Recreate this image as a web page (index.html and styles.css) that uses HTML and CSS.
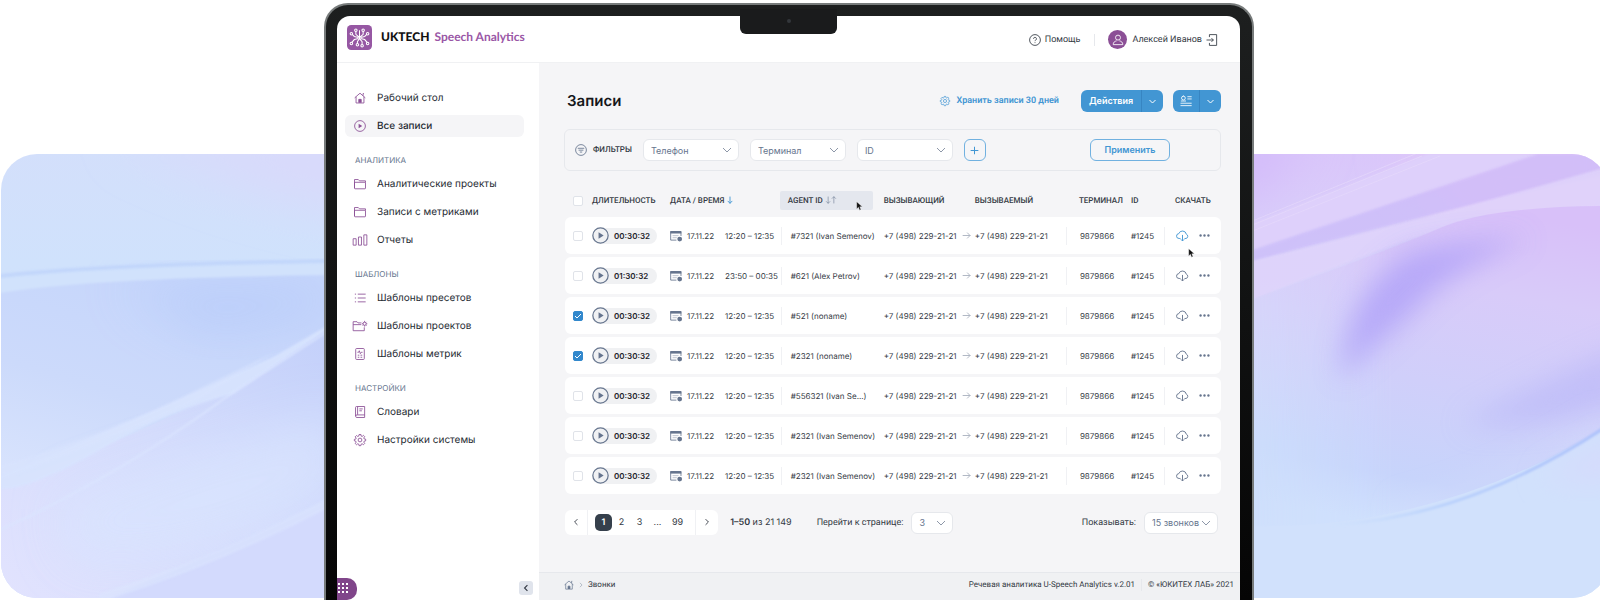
FILE: index.html
```html
<!DOCTYPE html>
<html lang="ru">
<head>
    <meta charset="UTF-8">
    <meta name="viewport" content="width=device-width, initial-scale=1.0">
    <title>UKTECH Speech Analytics - Записи</title>
    <link rel="stylesheet" href="styles.css">
</head>
<body>
    <!-- Icon set -->
    <svg class="sprite" aria-hidden="true">
        <symbol id="i-home" viewBox="0 0 14 14"><path d="M.8 6.800 7 1.400l6.200 5.400M2.400 5.600v7.200h9.200V5.600M10.600 4.400V1.800h1M5.600 12.400V8.600h2.800v3.800"/><path class="fill" d="M5.600 8.600h2.800v4H5.600z"/></symbol>
        <symbol id="i-play" viewBox="0 0 14 14"><circle cx="7" cy="7" r="6.300"/><path class="fill" d="M5.400 4.400 9.600 7 5.400 9.600z"/></symbol>
        <symbol id="i-folder" viewBox="0 0 14 14"><path d="M.6 11.800V1.800h4.400l1.400 1.500h7v1.500M.6 5h12.800v7a.6.6 0 0 1-.6.6H1.200a.6.6 0 0 1-.6-.6z"/></symbol>
        <symbol id="i-bars" viewBox="0 0 14 14"><path d="M-1 5.500h3.500v7.500H-1zM5.200 3.500h3.500v9.500h-3.500zM11.500 1H15v12h-3.500z"/></symbol>
        <symbol id="i-list" viewBox="0 0 14 14"><path d="M4.400 2.500h9.200M4.400 7h9.200M4.400 11.500h9.200M1 2.500h1.400M1 7h1.400M1 11.500h1.400"/></symbol>
        <symbol id="i-folder-gear" viewBox="0 0 14 14"><path d="M12 8.500v4H-1V2h4.500l1.200 1.400h4M-1 5.400h9.500"/><circle cx="12.400" cy="4.400" r="1.800"/><path d="M12.400 1v1.500M12.400 6.200v1.500M9.200 4.400h1.300M14.200 4.400h1.300M10.200 2.200l.8.8M13.800 5.800l.8.8M14.600 2.200l-.8.8M11 5.800l-.8.8"/></symbol>
        <symbol id="i-metric" viewBox="0 0 14 14"><rect x="2" y=".6" width="10" height="12.800" rx="1"/><path d="M4 5h1.400l.8-1.800 1.200 3.400L8.400 5H10M4.400 8.400h1.800M7.600 8.400h2M4.400 10.800h1.800M7.600 10.800h2"/></symbol>
        <symbol id="i-book" viewBox="0 0 14 14"><path d="M12.400 10.400H3.400a1.500 1.500 0 0 0 0 3h9V.6H3a1.200 1.200 0 0 0-1.200 1.200v10M4.200 1v9.200M6.200 3.400h4M6.200 5.600h3"/></symbol>
        <symbol id="i-gear" viewBox="0 0 14 14"><circle cx="7" cy="7" r="2.200"/><path d="m5.900.6-.3 1.800-1.200.5-1.500-1.100-1.500 1.500 1.100 1.500-.5 1.200-1.600.2v1.800l1.600.3.5 1.200-1.100 1.500 1.500 1.500 1.500-1.100 1.200.5.3 1.700h2.100l.3-1.700 1.200-.5 1.500 1.100 1.500-1.500-1.100-1.500.5-1.200 1.700-.3V6l-1.700-.2-.5-1.200 1.100-1.500-1.500-1.500L9.500 2.900l-1.200-.5L8.100.6z"/></symbol>
        <symbol id="i-help" viewBox="0 0 14 14"><circle cx="7" cy="7" r="6.300"/><path d="M5.300 5.600a1.700 1.700 0 1 1 2.500 1.500c-.5.3-.8.6-.8 1.200M7 9.700v.9"/></symbol>
        <symbol id="i-user" viewBox="0 0 14 14"><circle cx="7" cy="4.200" r="2.900"/><path d="M5.400 8C3 8.400 1.400 9.800 1.400 12.400h11.200C12.600 9.800 11 8.400 8.600 8"/></symbol>
        <symbol id="i-exit" viewBox="0 0 14 14"><path d="M4 3.600V.7h8.400v12.600H4v-2.900M.6 7h8M6.400 4.800 8.600 7 6.400 9.200"/></symbol>
        <symbol id="i-filter" viewBox="0 0 14 14"><circle cx="7" cy="7" r="6.300"/><path d="M3.200 5h7.600M4.200 7.200h5.600M5.600 9.400h2.800"/></symbol>
        <symbol id="i-down" viewBox="0 0 14 14"><path d="M1 4 7 10l6-6"/></symbol>
        <symbol id="i-left" viewBox="0 0 14 14"><path d="M9.500 2 4.500 7l5 5"/></symbol>
        <symbol id="i-right" viewBox="0 0 14 14"><path d="m4.500 2 5 5-5 5"/></symbol>
        <symbol id="i-plus" viewBox="0 0 14 14"><path d="M7 1v12M1 7h12"/></symbol>
        <symbol id="i-card" viewBox="0 0 14 14"><circle cx="4" cy="3.600" r="2.200"/><path d="M1 7h6M8.600 2h5M8.600 4.600h5M.6 9.600h13M.6 12.400h13M4 .6v1"/></symbol>
        <symbol id="i-calendar" viewBox="0 0 14 14"><path d="M7.500 11.800H.8V2h12v5"/><path class="fill" d="M.4 1.200h12.800V4.200H.4z"/><path class="faint" d="M3 6.600h7M3 9h5"/><circle class="fill" cx="11.300" cy="10.600" r="2.800"/></symbol>
        <symbol id="i-cloud" viewBox="0 0 14 14"><path d="M4.800 10.200H3.400a2.600 2.600 0 0 1-.4-5.200 4.200 4.200 0 0 1 8.100.6 2.400 2.400 0 0 1-.3 4.600H9.200M7 6.400v6.400M5.200 11.100 7 12.900l1.800-1.800"/></symbol>
        <symbol id="i-dots" viewBox="0 0 14 14"><circle class="fill" cx="2" cy="7" r="1.500"/><circle class="fill" cx="7" cy="7" r="1.500"/><circle class="fill" cx="12" cy="7" r="1.500"/></symbol>
        <symbol id="i-arrow" viewBox="0 0 14 14"><path d="M1 7h12M8 2.500 12.500 7 8 11.500"/></symbol>
        <symbol id="i-sort-down" viewBox="0 0 14 14"><path d="M7 1v12M3 8.600 7 12.800 11 8.600"/></symbol>
        <symbol id="i-sort" viewBox="0 0 20 14"><path d="M5 1v12M1.500 9.300 5 12.800l3.500-3.500M15 13V1M11.500 4.700 15 1.200l3.500 3.500"/></symbol>
        <symbol id="i-cursor" viewBox="0 0 10 14"><path d="M1 .8v10.400l2.500-2.300 1.700 4 1.900-.8-1.700-3.900H9z"/></symbol>
    </svg>

    <div class="stage">
        <svg class="backdrop" viewBox="0 0 1600 600" preserveAspectRatio="none" aria-hidden="true">
            <defs>
                <clipPath id="card"><rect x="1" y="154" width="1607" height="444" rx="36"/></clipPath>
                <linearGradient id="left" x1="0" y1="0" x2="0" y2="1">
                    <stop offset="0" stop-color="#d3dffb"/><stop offset=".25" stop-color="#d0e2fc"/>
                    <stop offset=".6" stop-color="#d2dffc"/><stop offset="1" stop-color="#dee2fe"/>
                </linearGradient>
                <linearGradient id="wave" x1=".3" y1="0" x2="0" y2="1">
                    <stop offset="0" stop-color="#c6d6fb"/><stop offset=".35" stop-color="#ccdafb"/>
                    <stop offset=".65" stop-color="#d8e3fd"/><stop offset="1" stop-color="#d9e3fd"/>
                </linearGradient>
                <linearGradient id="low" x1="1" y1="0" x2="0" y2="1">
                    <stop offset="0" stop-color="#c3d0fa"/><stop offset=".45" stop-color="#d3dbfc"/><stop offset="1" stop-color="#e2e3fe"/>
                </linearGradient>
                <linearGradient id="right" x1="0" y1="0" x2="0" y2="1">
                    <stop offset="0" stop-color="#dac6fa"/><stop offset=".35" stop-color="#d7d6fb"/>
                    <stop offset=".65" stop-color="#cddefc"/><stop offset="1" stop-color="#d2e2fc"/>
                </linearGradient>
                <linearGradient id="petal" x1=".6" y1="0" x2=".4" y2="1">
                    <stop offset="0" stop-color="#d8c0f9"/><stop offset=".25" stop-color="#d8cbf9"/>
                    <stop offset=".55" stop-color="#d0cffa"/><stop offset=".85" stop-color="#c7d4fb"/><stop offset="1" stop-color="#cfe0fd"/>
                </linearGradient>
                <linearGradient id="fade" x1="0" y1="0" x2="1" y2="0">
                    <stop offset="0" stop-color="#fff" stop-opacity="0"/><stop offset=".4" stop-color="#fff"/>
                </linearGradient>
                <linearGradient id="rim" gradientUnits="userSpaceOnUse" x1="1330" y1="0" x2="1610" y2="0">
                    <stop offset="0" stop-color="#c4dcfc" stop-opacity="0"/><stop offset=".4" stop-color="#b9d1fc"/><stop offset="1" stop-color="#acc0fb"/>
                </linearGradient>
                <mask id="petal-mask"><rect x="1240" y="150" width="380" height="450" fill="url(#fade)"/></mask>
                <filter id="b2" x="-20%" y="-20%" width="140%" height="140%"><feGaussianBlur stdDeviation="1"/></filter>
                <filter id="b9" x="-50%" y="-50%" width="200%" height="200%"><feGaussianBlur stdDeviation="14"/></filter>
                <filter id="b25" x="-50%" y="-50%" width="200%" height="200%"><feGaussianBlur stdDeviation="25"/></filter>
            </defs>
            <g clip-path="url(#card)">
                <path fill="url(#left)" d="M0 150h700v450H0z"/>
                <path fill="#d9d9fb" filter="url(#b25)" d="M120 130h320v90Q260 205 120 130z"/>
                <path fill="url(#wave)" d="M0 275Q110 264 330 259V600H0z"/>
                <path fill="#b7cbfa" filter="url(#b25)" opacity=".8" d="M120 285h220l-20 30-110 20z"/>
                <path fill="#d1e2fc" d="M0 274Q110 264 330 258v17Q90 278 0 293z" filter="url(#b2)"/>
                <path fill="none" stroke="#bfd4fb" stroke-width="4" filter="url(#b2)" opacity=".8" d="M0 276Q110 264 330 261"/>
                <path fill="url(#low)" d="M0 484Q180 425 330 327V600H0z"/>
                <path fill="#d9e4fe" filter="url(#b25)" opacity=".8" d="M60 500Q200 450 340 410v80Q200 570 70 560z"/>
                <path fill="#d8e4fe" filter="url(#b2)" opacity=".9" d="M0 476Q170 405 275 356L330 324v4L232 394Q170 410 100 450T0 489z"/>
                <path fill="#d9e4fe" filter="url(#b2)" opacity=".5" d="M0 466Q120 430 200 388L275 352l-75 47Q120 436 0 480z"/>
                <path fill="none" stroke="#dbe6fe" stroke-width="2" filter="url(#b2)" opacity=".8" d="M0 530Q120 475 225 398L330 330"/>
                <path fill="#d3dafd" filter="url(#b2)" d="M110 598Q220 550 330 502v98H100z"/>
                <path fill="none" stroke="#dbe5fe" stroke-width="9" filter="url(#b2)" opacity=".6" d="M100 598Q220 560 330 502"/>

                <path fill="url(#right)" d="M900 150h710v450H900z"/>
                <path fill="#e3c8f8" filter="url(#b25)" d="M1400 140h220v80l-150 10z"/>
                <path fill="#d2b9fa" filter="url(#b25)" d="M1200 130h110l-70 80z"/>
                <path fill="#ded0fb" filter="url(#b2)" d="M1250 224 1428 154h112L1250 251z"/>
                <path fill="none" stroke="#e6d8fb" stroke-width="1" opacity=".7" d="m1250 226 172-70M1250 232l190-76M1250 222l170-70"/>
                <path fill="#c9b8f9" filter="url(#b2)" opacity=".6" d="M1250 251 1538 154h70v20Q1420 215 1250 262z"/>
                <path fill="#e0d4fb" filter="url(#b2)" opacity=".85" d="M1250 262Q1440 215 1610 166v40Q1470 214 1380 250L1250 300z"/>
                <g mask="url(#petal-mask)">
                    <path fill="url(#petal)" d="M1250 300Q1390 250 1440 228T1610 206V422Q1490 525 1330 525H1250z"/>
                </g>
                <path fill="#ac9df8" filter="url(#b9)" opacity=".75" d="M1340 380Q1345 290 1410 252Q1460 240 1530 238Q1440 275 1410 315Q1375 345 1340 380z"/>
                <path fill="#b3b0f7" filter="url(#b9)" opacity=".5" d="M1625 345Q1540 380 1460 425Q1540 430 1625 405z"/>
                <path fill="none" stroke="#d5dcfc" stroke-width="8" filter="url(#b9)" d="M1400 512Q1500 490 1610 420"/>
                <path fill="#d1e1fc" d="M1250 526Q1440 530 1610 424V600H1250z"/>
                <path fill="#d5dafc" filter="url(#b9)" d="M1540 480 1620 435v45z"/>
                <path fill="none" stroke="url(#rim)" stroke-width="3" filter="url(#b2)" d="M1330 525Q1470 518 1610 424"/>
            </g>
        </svg>

        <div class="laptop">
            <div class="notch"></div>
            <div class="screen">
                <header class="topbar">
                    <a class="brand" href="#">
                        <svg class="brand-mark" viewBox="0 0 24 24" aria-hidden="true">
                            <rect width="24" height="24" rx="4"/>
                            <path d="M12 13V5M12 12 8.500 9V6M12 12l3.500-3V6M11 12 7 11 5 9M13 12l4-1 2-2M11 13l-4 1-2.500 3M13 13l4 1 2.500 3M12 13l-2 3v2M12 13l2.500 3v3"/>
                            <circle cx="8.500" cy="5" r="1.200"/><circle cx="15.500" cy="5" r="1.200"/><circle cx="4.200" cy="8.300" r="1.200"/><circle cx="19.800" cy="8.300" r="1.200"/>
                            <circle cx="4.200" cy="17.800" r="1.200"/><circle cx="19.800" cy="17.800" r="1.200"/><circle cx="10" cy="19" r="1.200"/><circle cx="14.500" cy="20" r="1.200"/>
                        </svg>
                        <strong>UKTECH</strong>
                        <span>Speech Analytics</span>
                    </a>
                    <div class="account">
                        <a class="help" href="#"><svg class="icon"><use href="#i-help"/></svg>Помощь</a>
                        <a class="profile" href="#"><span class="avatar"><svg class="icon"><use href="#i-user"/></svg></span>Алексей Иванов</a>
                        <button class="exit" aria-label="Выйти"><svg class="icon"><use href="#i-exit"/></svg></button>
                    </div>
                </header>

                <div class="layout">
                    <aside class="sidebar">
                        <nav>
                            <ul class="menu">
                                <li><a href="#"><svg class="icon"><use href="#i-home"/></svg>Рабочий стол</a></li>
                                <li><a class="active" href="#"><svg class="icon"><use href="#i-play"/></svg>Все записи</a></li>
                            </ul>
                            <h2>Аналитика</h2>
                            <ul class="menu">
                                <li><a href="#"><svg class="icon"><use href="#i-folder"/></svg>Аналитические проекты</a></li>
                                <li><a href="#"><svg class="icon"><use href="#i-folder"/></svg>Записи с метриками</a></li>
                                <li><a href="#"><svg class="icon"><use href="#i-bars"/></svg>Отчеты</a></li>
                            </ul>
                            <h2>Шаблоны</h2>
                            <ul class="menu">
                                <li><a href="#"><svg class="icon"><use href="#i-list"/></svg>Шаблоны пресетов</a></li>
                                <li><a href="#"><svg class="icon"><use href="#i-folder-gear"/></svg>Шаблоны проектов</a></li>
                                <li><a href="#"><svg class="icon"><use href="#i-metric"/></svg>Шаблоны метрик</a></li>
                            </ul>
                            <h2>Настройки</h2>
                            <ul class="menu">
                                <li><a href="#"><svg class="icon"><use href="#i-book"/></svg>Словари</a></li>
                                <li><a href="#"><svg class="icon"><use href="#i-gear"/></svg>Настройки системы</a></li>
                            </ul>
                        </nav>
                        <div class="sidebar-bottom">
                            <button class="apps" aria-label="Приложения">
                                <svg viewBox="0 0 12 12"><path d="M0 0h2v2H0zM4 0h2v2H4zM8 0h2v2H8zM0 4h2v2H0zM4 4h2v2H4zM8 4h2v2H8zM0 8h2v2H0zM4 8h2v2H4zM8 8h2v2H8z"/></svg>
                            </button>
                            <button class="collapse" aria-label="Свернуть"><svg class="icon"><use href="#i-left"/></svg></button>
                        </div>
                    </aside>

                    <div class="content">
                        <main>
                            <div class="heading">
                                <h1>Записи</h1>
                                <a class="storage" href="#"><svg class="icon"><use href="#i-gear"/></svg>Хранить записи 30 дней</a>
                                <div class="split">
                                    <button class="split-main">Действия</button>
                                    <button class="split-toggle" aria-label="Список действий"><svg class="icon"><use href="#i-down"/></svg></button>
                                </div>
                                <div class="split split-small">
                                    <button class="split-main" aria-label="Вид"><svg class="icon"><use href="#i-card"/></svg></button>
                                    <button class="split-toggle" aria-label="Список видов"><svg class="icon"><use href="#i-down"/></svg></button>
                                </div>
                            </div>

                            <form class="filters">
                                <span class="filters-title"><svg class="icon"><use href="#i-filter"/></svg>Фильтры</span>
                                <select aria-label="Телефон"><option>Телефон</option></select>
                                <select aria-label="Терминал"><option>Терминал</option></select>
                                <select aria-label="ID"><option>ID</option></select>
                                <button class="add" type="button" aria-label="Добавить фильтр"><svg class="icon"><use href="#i-plus"/></svg></button>
                                <button class="apply" type="button">Применить</button>
                            </form>

                            <table class="records">
                                <colgroup>
                                    <col class="c-check"><col class="c-duration"><col class="c-date"><col class="c-agent"><col class="c-phone">
                                    <col class="c-phone"><col class="c-terminal"><col class="c-id"><col class="c-load">
                                </colgroup>
                                <thead>
                                    <tr>
                                        <th><input type="checkbox" aria-label="Выбрать все"></th>
                                        <th>Длительность</th>
                                        <th>Дата / время <svg class="icon sort-on"><use href="#i-sort-down"/></svg></th>
                                        <th class="sorting"><div>Agent ID <svg class="icon"><use href="#i-sort"/></svg><svg class="cursor"><use href="#i-cursor"/></svg></div></th>
                                        <th>Вызывающий</th>
                                        <th>Вызываемый</th>
                                        <th class="terminal">Терминал</th>
                                        <th>ID</th>
                                        <th class="load">Скачать</th>
                                    </tr>
                                </thead>
                                <tbody id="records"></tbody>
                            </table>

                            <div class="paging">
                                <div class="pages">
                                    <button class="step" aria-label="Назад"><svg class="icon"><use href="#i-left"/></svg></button>
                                    <div class="numbers">
                                        <a class="current" href="#">1</a><a href="#">2</a><a href="#">3</a><span>...</span><a href="#">99</a>
                                    </div>
                                    <button class="step" aria-label="Вперед"><svg class="icon"><use href="#i-right"/></svg></button>
                                </div>
                                <p class="range"><b>1–50</b> из 21 149</p>
                                <label for="page">Перейти к странице:</label>
                                <select id="page" class="page-select"><option>3</option></select>
                                <label class="show" for="size">Показывать:</label>
                                <select id="size" class="size-select"><option>15 звонков</option></select>
                            </div>
                        </main>

                        <footer>
                            <a class="crumb-home" href="#" aria-label="Главная"><svg class="icon"><use href="#i-home"/></svg></a>
                            <svg class="icon crumb-sep"><use href="#i-right"/></svg>
                            <a href="#">Звонки</a>
                            <span class="version">Речевая аналитика U-Speech Analytics v.2.01</span>
                            <span class="copy">© «ЮКИТЕХ ЛАБ» 2021</span>
                        </footer>
                    </div>
                </div>
            </div>
        </div>
    </div>

    <script src="app.js"></script>
</body>
</html>
```
FILE: styles.css
```css
:root {
    --purple: #8b4f96;
    --blue: #4296d3;
    --slate: #66758e;
    --text: #343a44;
    --line: #e6e8ec;
    --narrow: Roboto, "Liberation Sans", sans-serif;
    --chevron: url("data:image/svg+xml,%3Csvg xmlns='http://www.w3.org/2000/svg' viewBox='0 0 10 10'%3E%3Cpath d='M1 3l4 4 4-4' fill='none' stroke='%238d97a8'/%3E%3C/svg%3E");
}

* {
    margin: 0;
    padding: 0;
    box-sizing: border-box;
}

body {
    font-family: Inter, "Liberation Sans", sans-serif;
    font-size: 8px;
    line-height: 12px;
    text-rendering: geometricPrecision;
    color: var(--text);
    background-color: #fff;
}

a {
    color: inherit;
    text-decoration: none;
}

button {
    font: inherit;
    border: none;
    background: none;
    cursor: pointer;
    color: inherit;
}

ul {
    list-style: none;
}

.sprite {
    position: absolute;
    width: 0;
    height: 0;
}

.icon {
    width: 12px;
    height: 12px;
    fill: none;
    stroke: currentColor;
    stroke-width: 1;
    overflow: visible;
    flex: none;
}

symbol {
    overflow: visible;
}

.fill {
    fill: currentColor;
    stroke: none;
}

.faint {
    opacity: 0.5;
}

.stage {
    position: relative;
    height: 100vh;
    min-height: 600px;
    overflow: hidden;
    display: grid;
    grid-template-columns: 324fr minmax(930px, 930fr) 346fr;
    padding-top: 3px;
}

.backdrop {
    position: absolute;
    left: 0;
    top: 0;
    width: 100%;
    height: 100%;
}

/* Laptop */
.laptop {
    position: relative;
    grid-column: 2;
    display: flex;
    background: linear-gradient(#1d1f1f, #050505);
    border: 2px solid #777b7b;
    border-bottom: none;
    border-radius: 24px 24px 0 0;
    padding: 11px 12px 0 11px;
    overflow: hidden;
}

.notch {
    position: absolute;
    top: 4px;
    left: 50%;
    width: 97px;
    height: 25px;
    margin-left: -49px;
    background-color: #1a1b1c;
    border-radius: 0 0 6px 6px;
    z-index: 1;
}

.notch::after {
    content: "";
    display: block;
    width: 4px;
    height: 4px;
    margin: 10px auto;
    border-radius: 50%;
    background-color: #33373b;
}

.screen {
    flex: 1;
    min-width: 0;
    display: flex;
    flex-direction: column;
    background-color: #fff;
    border-radius: 13px 13px 0 0;
    overflow: hidden;
}

/* Header */
.topbar {
    display: flex;
    justify-content: space-between;
    align-items: center;
    height: 47px;
    padding: 0 22px 4px 10px;
    border-bottom: 1px solid #f0f1f3;
}

.brand {
    display: flex;
    align-items: center;
    font-family: Lato, sans-serif;
    font-size: 12px;
    font-weight: 700;
    color: #9a57a6;
}

.brand strong {
    margin: 0 5px 0 9px;
    font-weight: 900;
    color: #111;
}

.brand-mark {
    width: 25px;
    height: 25px;
    fill: none;
    stroke: #fff;
}

.brand-mark rect {
    fill: #9657a3;
    stroke: none;
}

.account,
.help,
.profile {
    display: flex;
    align-items: center;
}

.account {
    font-family: var(--narrow);
    font-size: 9px;
    padding-top: 5px;
}

.help {
    gap: 4px;
    padding-right: 14px;
    border-right: 1px solid var(--line);
    margin-right: 13px;
}

.profile {
    gap: 5px;
    margin-right: 4px;
}

.avatar {
    display: flex;
    align-items: center;
    justify-content: center;
    width: 19px;
    height: 19px;
    border-radius: 50%;
    background-color: var(--purple);
    color: #fff;
}

.exit {
    display: flex;
}

/* Sidebar */
.layout {
    flex: 1;
    display: flex;
    min-height: 0;
}

.sidebar {
    width: 202px;
    flex: none;
    display: flex;
    flex-direction: column;
    justify-content: space-between;
    padding-top: 24px;
}

.sidebar nav {
    padding: 0 15px 0 8px;
}

.menu {
    display: grid;
    gap: 6px;
}

.menu a {
    display: flex;
    align-items: center;
    gap: 11px;
    height: 22px;
    padding-left: 9px;
    border-radius: 6px;
    font-size: 10px;
    color: #262b33;
}

.menu .icon {
    color: var(--purple);
}

.menu .active {
    background-color: #f5f5f7;
    font-weight: 500;
}

.sidebar h2 {
    margin: 17px 0 7px 10px;
    font-size: 8px;
    line-height: 12px;
    font-weight: 400;
    text-transform: uppercase;
    color: var(--slate);
}

.sidebar-bottom {
    display: flex;
    justify-content: space-between;
    align-items: flex-start;
    padding-right: 6px;
}

.apps {
    width: 20px;
    height: 22px;
    padding-left: 1px;
    border-radius: 0 10px 10px 0;
    background-color: #80458a;
}

.apps svg {
    display: block;
    width: 12px;
    height: 12px;
    fill: #fff;
}

.collapse {
    display: flex;
    align-items: center;
    justify-content: center;
    width: 14px;
    height: 14px;
    margin-top: 3px;
    border-radius: 3px;
    background-color: #e0e4ec;
}

.collapse .icon {
    width: 8px;
    height: 8px;
    stroke-width: 2;
}

/* Content */
.content {
    flex: 1;
    min-width: 0;
    display: flex;
    flex-direction: column;
    background-color: #f5f5f7;
}

main {
    flex: 1;
    padding: 27px 19px 0 25px;
}

.heading {
    display: flex;
    align-items: center;
    margin-bottom: 17px;
    font-size: 9px;
    font-weight: 600;
}

h1 {
    flex: 1;
    padding-left: 3px;
    font-size: 15px;
    line-height: 22px;
    font-weight: 600;
    color: #15171a;
}

.storage {
    display: flex;
    align-items: center;
    gap: 6px;
    margin-right: 22px;
    font-family: var(--narrow);
    color: var(--blue);
}

.storage .icon {
    width: 10px;
    height: 10px;
}

.split {
    display: flex;
    width: 82px;
    height: 22px;
    border-radius: 6px;
    background-color: var(--blue);
    color: #fff;
}

.split-small {
    width: 48px;
    margin-left: 10px;
}

.split button {
    display: flex;
    align-items: center;
    justify-content: center;
}

.split-main {
    flex: 1;
}

.split-toggle {
    width: 22px;
    border-left: 1px solid #3785c2;
}

.split-toggle .icon {
    width: 7px;
    height: 7px;
    stroke-width: 2;
}

.filters {
    display: flex;
    align-items: center;
    gap: 11px;
    height: 42px;
    padding: 0 50px 0 10px;
    border: 1px solid var(--line);
    border-radius: 6px;
}

.filters-title {
    display: flex;
    align-items: center;
    gap: 6px;
    font-family: var(--narrow);
    text-transform: uppercase;
    font-weight: 500;
}

.filters-title .icon {
    color: var(--slate);
}

select {
    appearance: none;
    width: 96px;
    height: 22px;
    padding: 0 7px;
    border: 1px solid var(--line);
    border-radius: 6px;
    background: #fff var(--chevron) no-repeat right 6px center / 10px 10px;
    font-family: inherit;
    font-size: 9px;
    color: var(--slate);
}

.add,
.apply {
    height: 22px;
    border: 1px solid #71b1e0;
    border-radius: 6px;
    color: var(--blue);
    font-size: 9px;
    font-weight: 600;
}

.add {
    display: flex;
    align-items: center;
    justify-content: center;
    width: 22px;
}

.add .icon {
    width: 9px;
    height: 9px;
    stroke-width: 1.6;
}

.apply {
    width: 80px;
    margin-left: auto;
}

/* Records */
.records {
    width: 100%;
    margin-top: 17px;
    padding-left: 1px;
    table-layout: fixed;
    border-collapse: separate;
    border-spacing: 0 3px;
}

.c-check { width: 27px; }
.c-duration { width: 12%; }
.c-date { width: 17%; }
.c-agent { width: 103px; }
.c-phone { width: 14%; }
.c-terminal { width: 10%; }
.c-id { width: 33px; }
.c-load { width: 57px; }

th {
    height: 23px;
    padding-bottom: 4px;
    text-align: left;
    text-transform: uppercase;
    font-family: var(--narrow);
    font-weight: 500;
    white-space: nowrap;
}

th .icon {
    width: 8px;
    height: 8px;
    vertical-align: -1px;
}

th .sort-on {
    color: var(--blue);
    stroke-width: 1.6;
}

.sorting div {
    position: relative;
    width: 93px;
    height: 19px;
    margin-left: -1px;
    padding-left: 8px;
    line-height: 19px;
    border-radius: 2px;
    background-color: #e4e7ee;
}

.sorting .icon {
    width: 12px;
    color: var(--slate);
}

.cursor {
    position: absolute;
    width: 7px;
    height: 10px;
    fill: #111;
    stroke: #fff;
    stroke-width: 0.5;
}

.sorting .cursor {
    left: 76px;
    top: 10px;
}

td {
    height: 37px;
    background-color: #fff;
    white-space: nowrap;
}

td:first-child {
    border-radius: 6px 0 0 6px;
}

td:last-child {
    border-radius: 0 6px 6px 0;
}

th:first-child,
td:first-child {
    padding-left: 8px;
}

input[type="checkbox"] {
    appearance: none;
    display: block;
    width: 10px;
    height: 10px;
    border: 1px solid #e0e3e9;
    border-radius: 2px;
    background-color: #fff;
}

input[type="checkbox"]:checked {
    border-color: #3288cc;
    background: #3288cc url("data:image/svg+xml,%3Csvg xmlns='http://www.w3.org/2000/svg' viewBox='0 0 10 10'%3E%3Cpath d='M2 5l2 2 4-4' fill='none' stroke='white'/%3E%3C/svg%3E") center / 10px 10px;
}

.duration {
    display: flex;
    align-items: center;
    gap: 5px;
    width: 65px;
    height: 16px;
    border-radius: 8px;
    background-color: #f0f1f3;
    font-weight: 600;
    color: #1f242c;
}

.duration .icon {
    width: 17px;
    height: 17px;
    color: var(--slate);
}

.date,
.caller,
.actions,
.split-cell {
    display: flex;
    align-items: center;
}

.date .icon {
    margin-right: 5px;
    color: var(--slate);
}

.date time + time {
    margin-left: 11px;
}

.split-cell {
    height: 18px;
    border-left: 1px solid #f0f1f4;
    padding-left: 9px;
}

.terminal .split-cell,
th.terminal {
    padding-left: 13px;
}

.caller {
    gap: 5px;
}

.caller .icon {
    width: 9px;
    height: 9px;
    color: #a9b1be;
    stroke-width: 1.4;
}

.actions {
    position: relative;
    gap: 10px;
    padding-left: 11px;
    color: var(--slate);
}

th.load {
    padding-left: 11px;
}

.actions button {
    display: flex;
}

.actions .icon {
    width: 13px;
    height: 13px;
}

.actions .more .icon {
    width: 11px;
    height: 11px;
}

.actions .hover {
    color: var(--blue);
}

.actions .cursor {
    left: 23px;
    top: 21px;
}

/* Paging */
.paging {
    display: flex;
    align-items: center;
    margin-top: 13px;
    padding: 0 3px 0 1px;
    font-size: 9px;
}

.pages {
    display: flex;
    height: 25px;
    border-radius: 6px;
    background-color: #fff;
}

.step {
    width: 22px;
}

.step .icon {
    width: 8px;
    height: 8px;
    stroke-width: 1.6;
}

.numbers {
    display: flex;
    align-items: center;
    gap: 1px;
    padding: 0 7px;
    border: solid #f0f1f4;
    border-width: 0 1px;
}

.numbers > * {
    min-width: 17px;
    line-height: 17px;
    text-align: center;
}

.numbers > :last-child {
    padding: 0 5px;
}

.numbers .current {
    border-radius: 5px;
    background-color: #36404c;
    color: #fff;
    font-weight: 600;
}

.range {
    margin: 0 25px 0 12px;
}

.range b {
    font-weight: 600;
}

.paging label {
    font-family: var(--narrow);
}

.paging .page-select {
    width: 42px;
    margin-left: 8px;
}

.show {
    margin-left: auto;
}

.paging .size-select {
    width: 74px;
    margin-left: 8px;
}

footer {
    display: flex;
    align-items: center;
    height: 28px;
    padding: 0 6px 4px 25px;
    border-top: 1px solid var(--line);
    background-color: #f0f1f3;
    font-family: var(--narrow);
}

footer .icon {
    width: 10px;
    height: 10px;
    color: var(--slate);
}

footer .crumb-home {
    display: flex;
}

footer .crumb-sep {
    width: 6px;
    height: 6px;
    margin: 0 4px;
}

.version {
    margin-left: auto;
    padding-right: 6px;
    border-right: 1px solid var(--line);
}

.copy {
    padding-left: 6px;
}
```
FILE: app.js
```js
const records = [
    { duration: '00:30:32', time: '12:20 – 12:35', agent: '#7321 (Ivan Semenov)', hover: true },
    { duration: '01:30:32', time: '23:50 – 00:35', agent: '#621 (Alex Petrov)' },
    { duration: '00:30:32', time: '12:20 – 12:35', agent: '#521 (noname)', checked: true },
    { duration: '00:30:32', time: '12:20 – 12:35', agent: '#2321 (noname)', checked: true },
    { duration: '00:30:32', time: '12:20 – 12:35', agent: '#556321 (Ivan Se...)' },
    { duration: '00:30:32', time: '12:20 – 12:35', agent: '#2321 (Ivan Semenov)' },
    { duration: '00:30:32', time: '12:20 – 12:35', agent: '#2321 (Ivan Semenov)' }
];

const icon = name => `<svg class="icon"><use href="#i-${name}"/></svg>`;

document.getElementById('records').innerHTML = records.map(r => `
    <tr>
        <td><input type="checkbox" aria-label="Выбрать ${r.agent}" ${r.checked ? 'checked' : ''}></td>
        <td><button class="duration">${icon('play')}${r.duration}</button></td>
        <td><div class="date">${icon('calendar')}<time>17.11.22</time><time>${r.time}</time></div></td>
        <td><div class="split-cell">${r.agent}</div></td>
        <td><div class="caller">+7 (498) 229-21-21${icon('arrow')}</div></td>
        <td>+7 (498) 229-21-21</td>
        <td class="terminal"><div class="split-cell">9879866</div></td>
        <td>#1245</td>
        <td>
            <div class="split-cell actions">
                <button class="${r.hover ? 'hover' : ''}" aria-label="Скачать">${icon('cloud')}</button>
                <button class="more" aria-label="Еще">${icon('dots')}</button>
                ${r.hover ? '<svg class="cursor"><use href="#i-cursor"/></svg>' : ''}
            </div>
        </td>
    </tr>
`).join('');
```
